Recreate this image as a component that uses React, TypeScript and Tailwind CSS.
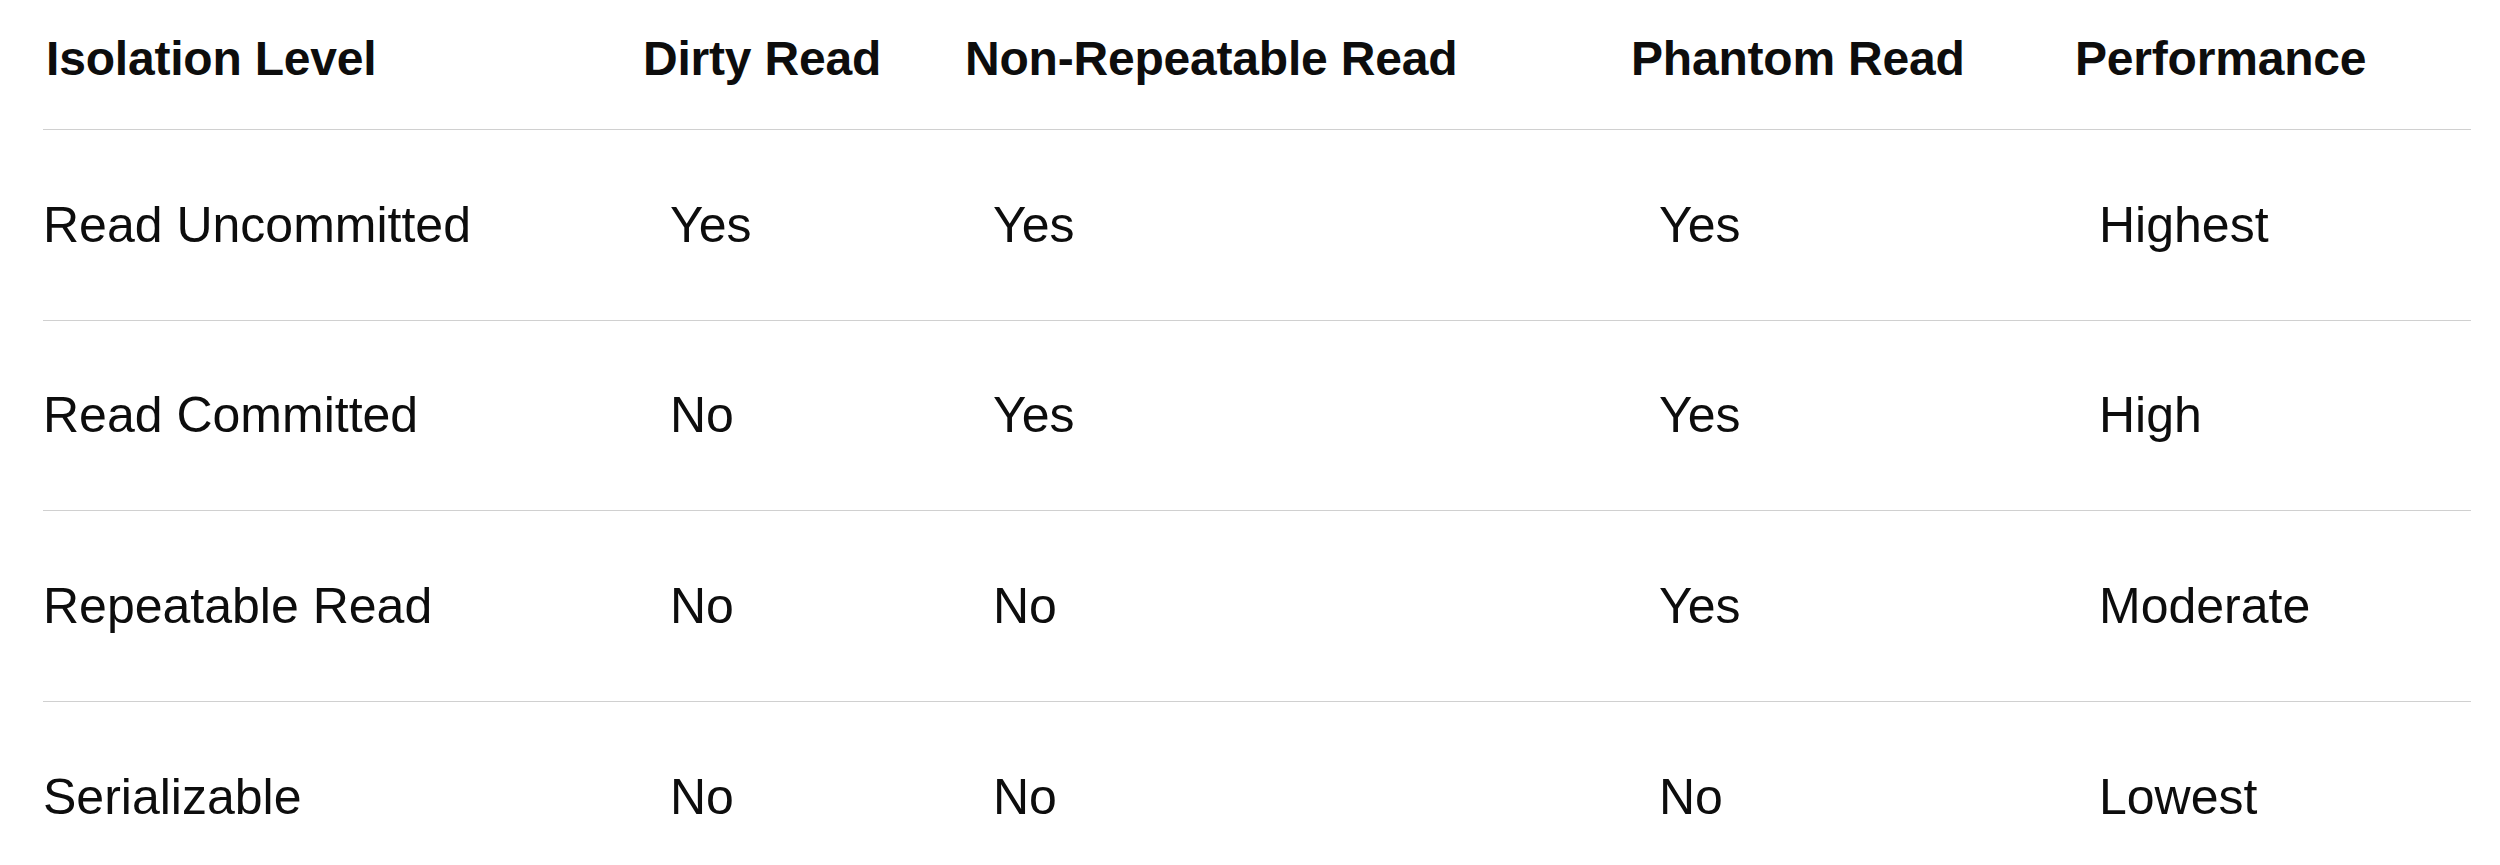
import React from "react";

const headers = ["Isolation Level", "Dirty Read", "Non-Repeatable Read", "Phantom Read", "Performance"];
const rows = [
  ["Read Uncommitted", "Yes", "Yes", "Yes", "Highest"],
  ["Read Committed", "No", "Yes", "Yes", "High"],
  ["Repeatable Read", "No", "No", "Yes", "Moderate"],
  ["Serializable", "No", "No", "No", "Lowest"],
];

const headPad = ["pl-[3px]", "pl-0", "pl-0", "pl-0", "pl-0"];
const bodyPad = ["pl-0", "pl-[27px]", "pl-[28px]", "pl-[28px]", "pl-[24px]"];

export default function App() {
  return (
    <div
      className="w-[2500px] h-[865px] overflow-hidden bg-white text-[#0d0d0d]"
      style={{ fontFamily: '"Liberation Sans", Arial, sans-serif' }}
    >
      <div className="ml-[43px] w-[2428px]">
        <div className="grid grid-cols-[600px_322px_666px_444px_396px] h-[130px] border-b border-[#d0d0d0]">
          {headers.map((h, i) => (
            <div
              key={h}
              className={`${headPad[i]} pt-[35px] text-[48px] leading-[48px] font-bold tracking-[-0.2px] whitespace-nowrap`}
            >
              {h}
            </div>
          ))}
        </div>
        {rows.map((r, ri) => (
          <div
            key={ri}
            className="grid grid-cols-[600px_322px_666px_444px_396px] h-[190.67px] border-b border-[#d0d0d0]"
          >
            {r.map((c, ci) => (
              <div
                key={ci}
                className={`${bodyPad[ci]} flex items-center text-[50px] leading-[50px] whitespace-nowrap`}
              >
                {c}
              </div>
            ))}
          </div>
        ))}
      </div>
    </div>
  );
}
